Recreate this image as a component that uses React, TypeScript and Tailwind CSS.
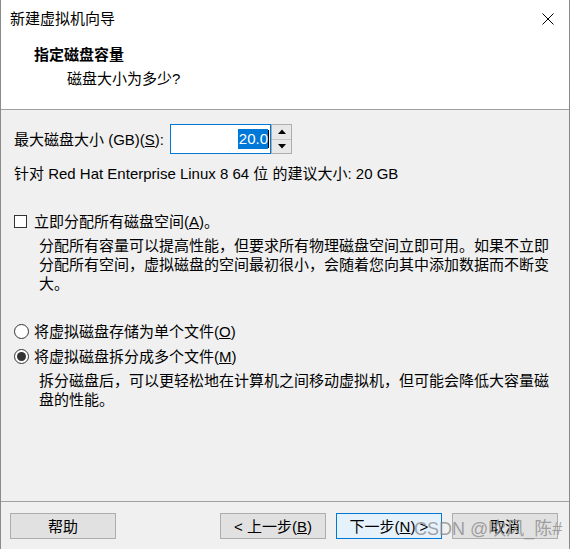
export default function App() {
  return (
    <div className="w-[572px] h-[549px] bg-white overflow-hidden font-['Liberation_Sans','Noto_Sans_CJK_SC',sans-serif] text-[15px] text-black">
      <div className="w-[570px] h-[549px] border-x border-[#8a8a8a] flex flex-col">
        {/* header */}
        <div className="h-[110px] shrink-0 bg-white border-b border-[#a0a0a0]">
          <div className="flex items-center justify-between pl-[9px] pr-[15px] pt-[9px]">
            <span className="leading-[20px]">新建虚拟机向导</span>
            <svg width="12" height="12" viewBox="0 0 12 12" className="block">
              <path d="M0.5 0.5 L11.5 11.5 M11.5 0.5 L0.5 11.5" stroke="#000" strokeWidth="1" fill="none" />
            </svg>
          </div>
          <div className="pl-[33px] mt-[16px] leading-[20px] font-bold">指定磁盘容量</div>
          <div className="pl-[66px] mt-[4px] leading-[20px]">磁盘大小为多少?</div>
        </div>

        {/* body */}
        <div className="h-[391px] shrink-0 bg-[#f0f0f0] pl-[13px] pt-[14px]">
          <div className="flex items-center h-[30px]">
            <span className="w-[156px] leading-[19px]">
              最大磁盘大小 (GB)(<span className="underline">S</span>):
            </span>
            <div className="flex h-[30px]">
              <div className="w-[101px] h-[30px] border border-[#0078d7] bg-white flex items-center justify-end pr-[1px]">
                <span className="bg-[#0078d7] text-white leading-[20px] pl-[1px]">20.0</span>
                <span className="w-px h-[18px] bg-black" />
              </div>
              <div className="w-[21px] h-[30px] flex flex-col border border-[#adadad] bg-[#f0f0f0]">
                <div className="flex-1 flex items-center justify-center border-b border-[#c8c8c8] bg-[#e8e8e8]">
                  <svg width="8" height="5" viewBox="0 0 8 5" className="block">
                    <path d="M0 5 L4 0.5 L8 5 Z" fill="#000" />
                  </svg>
                </div>
                <div className="flex-1 flex items-center justify-center bg-[#e8e8e8]">
                  <svg width="8" height="5" viewBox="0 0 8 5" className="block">
                    <path d="M0 0 L8 0 L4 4.5 Z" fill="#000" />
                  </svg>
                </div>
              </div>
            </div>
          </div>

          <div className="mt-[10px] leading-[19px]">
            针对 Red Hat Enterprise Linux 8 64 位 的建议大小: 20 GB
          </div>

          <div className="mt-[29px] flex items-center h-[19px]">
            <span className="w-[13px] h-[13px] border border-[#333333] bg-white shrink-0" />
            <span className="ml-[7px] leading-[19px]">
              立即分配所有磁盘空间(<span className="underline">A</span>)。
            </span>
          </div>
          <div className="mt-[5px] pl-[25px] w-[540px] leading-[19px]">
            分配所有容量可以提高性能，但要求所有物理磁盘空间立即可用。如果不立即分配所有空间，虚拟磁盘的空间最初很小，会随着您向其中添加数据而不断变大。
          </div>

          <div className="mt-[29px] flex items-center h-[19px]">
            <span className="w-[15px] h-[15px] rounded-full border border-[#333333] bg-white shrink-0" />
            <span className="ml-[5px] leading-[19px]">
              将虚拟磁盘存储为单个文件(<span className="underline">O</span>)
            </span>
          </div>
          <div className="mt-[6px] flex items-center h-[19px]">
            <span className="w-[15px] h-[15px] rounded-full border border-[#333333] bg-white shrink-0 flex items-center justify-center">
              <span className="w-[9px] h-[9px] rounded-full bg-[#333333]" />
            </span>
            <span className="ml-[5px] leading-[19px]">
              将虚拟磁盘拆分成多个文件(<span className="underline">M</span>)
            </span>
          </div>
          <div className="mt-[5px] pl-[25px] w-[540px] leading-[19px]">
            拆分磁盘后，可以更轻松地在计算机之间移动虚拟机，但可能会降低大容量磁盘的性能。
          </div>
        </div>

        {/* footer */}
        <div className="relative h-[48px] shrink-0 bg-[#f0f0f0] border-t border-[#a0a0a0] flex items-start justify-between pt-[11px] pl-[9px] pr-[11px]">
          <div className="w-[106px] h-[26px] border border-[#adadad] bg-[#e1e1e1] flex items-center justify-center leading-[19px]">
            帮助
          </div>
          <div className="flex gap-[10px]">
            <div className="w-[106px] h-[26px] border border-[#adadad] bg-[#e1e1e1] flex items-center justify-center leading-[19px]">
              &lt; 上一步(<span className="underline">B</span>)
            </div>
            <div className="w-[106px] h-[26px] border border-[#0078d7] bg-[#e5f1fb] flex items-center justify-center leading-[19px]">
              下一步(<span className="underline">N</span>) &gt;
            </div>
            <div className="w-[106px] h-[26px] border border-[#adadad] bg-[#e1e1e1] flex items-center justify-center leading-[19px]">
              取消
            </div>
          </div>
          <div className="absolute left-[413px] top-[16px] text-[18px] leading-[22px] whitespace-nowrap text-[#8c8c8c]/80">
            CSDN @吹风_陈#
          </div>
        </div>
      </div>
    </div>
  );
}
